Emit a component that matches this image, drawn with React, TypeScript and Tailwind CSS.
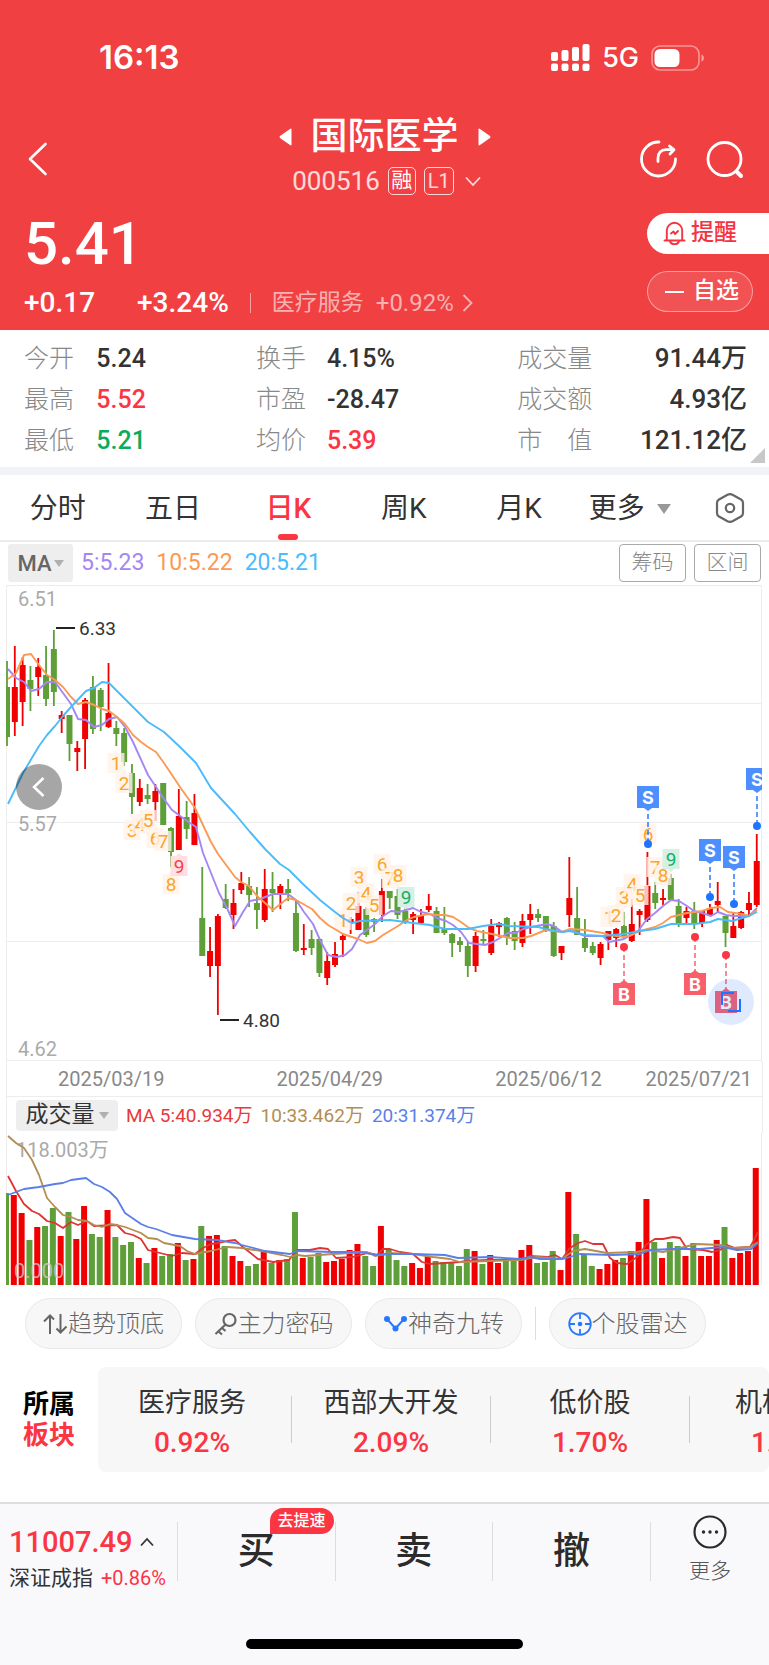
import { useState } from 'react'
import type { ReactNode } from 'react'
import clsx from 'clsx'

type Candle = [color: 'r' | 'g', high: number, top: number, bottom: number, low: number, volume: number]
type Point = [x: number, y: number]

const RED = '#f00000'
const GREEN = '#5e9f39'

// candle extents in plot units, measured down from the top of the price pane
const candles: Candle[] = [
  ['g', 76, 102, 152, 161, 92], ['r', 61, 102, 137, 151, 90], ['r', 72, 80, 117, 141, 72], ['g', 81, 95, 104, 126, 45],
  ['r', 73, 82, 92, 111, 58], ['g', 61, 90, 114, 121, 59], ['g', 45, 64, 107, 121, 77], ['r', 126, 130, 134, 148, 49],
  ['g', 130, 130, 159, 176, 73], ['r', 156, 163, 167, 186, 46], ['r', 113, 115, 154, 184, 79], ['g', 91, 102, 144, 149, 51],
  ['g', 103, 105, 122, 146, 48], ['r', 78, 128, 142, 143, 75], ['g', 136, 143, 149, 161, 48], ['g', 143, 148, 177, 181, 40],
  ['g', 179, 188, 212, 229, 43], ['r', 194, 203, 217, 221, 27], ['g', 199, 210, 214, 219, 22], ['r', 199, 206, 217, 236, 37],
  ['g', 198, 198, 240, 240, 29], ['g', 242, 243, 267, 282, 31], ['r', 204, 231, 265, 265, 42], ['g', 216, 232, 244, 254, 25],
  ['r', 209, 228, 260, 260, 26], ['g', 282, 333, 371, 371, 59], ['r', 342, 366, 381, 392, 49], ['r', 329, 331, 381, 430, 50],
  ['g', 299, 314, 323, 324, 39], ['r', 304, 318, 330, 344, 29], ['r', 287, 298, 305, 309, 24], ['g', 292, 301, 310, 322, 19],
  ['g', 302, 318, 325, 344, 21], ['r', 284, 304, 335, 337, 33], ['g', 287, 304, 308, 327, 22], ['r', 299, 301, 308, 324, 25],
  ['g', 294, 304, 308, 316, 26], ['g', 315, 328, 366, 367, 73], ['r', 339, 363, 365, 370, 27], ['g', 345, 354, 363, 370, 28],
  ['g', 353, 354, 388, 392, 32], ['r', 367, 376, 393, 400, 23], ['r', 357, 369, 380, 382, 24], ['r', 348, 351, 355, 372, 26],
  ['r', 332, 334, 338, 349, 35], ['r', 307, 321, 345, 345, 41], ['g', 322, 324, 350, 352, 29], ['g', 333, 334, 337, 347, 19],
  ['r', 294, 306, 330, 337, 59], ['g', 306, 306, 313, 324, 35], ['g', 304, 311, 330, 334, 25], ['g', 321, 326, 338, 339, 19],
  ['r', 327, 329, 335, 349, 22], ['r', 324, 330, 338, 338, 17], ['r', 309, 321, 325, 327, 29], ['g', 322, 326, 348, 348, 24],
  ['g', 322, 343, 348, 350, 23], ['g', 348, 349, 358, 372, 23], ['g', 352, 356, 360, 367, 19], ['g', 357, 361, 381, 392, 36],
  ['r', 347, 351, 381, 387, 34], ['g', 345, 354, 355, 360, 21], ['r', 334, 341, 368, 370, 30], ['r', 337, 338, 342, 352, 22],
  ['g', 332, 333, 352, 360, 25], ['g', 337, 346, 356, 365, 25], ['r', 329, 336, 358, 362, 35], ['r', 319, 329, 335, 349, 40],
  ['g', 324, 329, 333, 337, 22], ['g', 331, 331, 346, 347, 23], ['g', 337, 341, 371, 372, 34], ['r', 361, 361, 368, 375, 15],
  ['r', 272, 313, 330, 342, 93], ['g', 302, 333, 350, 350, 51], ['g', 334, 353, 363, 367, 30], ['g', 357, 361, 368, 370, 19],
  ['r', 357, 359, 373, 380, 16], ['r', 346, 346, 355, 365, 21], ['r', 343, 344, 353, 362, 25], ['g', 327, 341, 352, 353, 27],
  ['r', 314, 339, 356, 357, 34], ['r', 324, 326, 330, 350, 43], ['r', 267, 301, 335, 337, 86], ['g', 297, 308, 318, 324, 43],
  ['r', 304, 313, 315, 320, 27], ['g', 289, 293, 315, 315, 43], ['g', 314, 321, 338, 342, 39], ['r', 322, 326, 333, 338, 29],
  ['g', 317, 326, 339, 344, 42], ['r', 326, 326, 338, 342, 29], ['r', 319, 323, 330, 330, 29], ['r', 297, 316, 320, 327, 45],
  ['g', 331, 331, 348, 362, 58], ['r', 327, 341, 353, 353, 27], ['r', 326, 327, 343, 344, 32], ['r', 307, 318, 325, 330, 34],
  ['r', 249, 276, 320, 322, 117],
]

const priceLines: { color: string; points: Point[] }[] = [
  {
    color: '#a487f2',
    points: [
      [8, 84], [16, 93], [24, 97], [31, 106], [39, 104], [47, 97], [55, 97], [63, 108], [71, 119], [78, 134], [86, 135],
      [94, 142], [102, 140], [109, 134], [117, 132], [125, 142], [133, 157], [148, 190], [164, 214], [172, 225], [187, 236],
      [196, 242], [203, 268], [211, 288], [219, 308], [227, 323], [235, 341], [243, 327], [250, 316], [260, 314], [273, 309],
      [288, 309], [296, 315], [304, 327], [313, 339], [320, 355], [328, 370], [337, 372], [345, 370], [352, 364], [360, 350],
      [367, 345], [375, 339], [383, 331], [391, 326], [399, 327], [413, 323], [421, 327], [430, 329], [437, 333], [446, 336],
      [453, 340], [461, 347], [469, 358], [485, 360], [493, 357], [500, 353], [508, 348], [516, 348], [523, 344], [531, 342],
      [547, 339], [554, 341], [562, 347], [570, 345], [585, 351], [603, 351], [609, 357], [624, 354], [638, 346], [647, 334],
      [655, 328], [663, 321], [671, 315], [679, 316], [687, 321], [694, 326], [702, 328], [711, 331], [718, 327], [726, 330],
      [734, 331], [749, 331], [757, 323],
    ],
  },
  {
    color: '#fb9a54',
    points: [
      [8, 94], [16, 88], [24, 70], [31, 69], [39, 80], [47, 90], [55, 95], [63, 102], [71, 112], [78, 119], [86, 117],
      [94, 120], [102, 124], [109, 126], [117, 132], [125, 139], [133, 150], [141, 157], [148, 162], [156, 167], [164, 178],
      [172, 190], [180, 202], [195, 223], [202, 238], [211, 257], [218, 269], [235, 292], [241, 297], [249, 301], [257, 311],
      [265, 318], [273, 325], [288, 313], [296, 315], [312, 324], [320, 333], [328, 340], [343, 349], [358, 354], [367, 358],
      [375, 356], [383, 350], [398, 341], [407, 335], [414, 332], [428, 329], [437, 330], [445, 330], [453, 332], [461, 337],
      [469, 343], [477, 346], [492, 349], [510, 353], [523, 353], [531, 351], [546, 345], [562, 347], [570, 344], [585, 345],
      [603, 348], [609, 350], [624, 352], [632, 350], [640, 346], [655, 342], [663, 338], [671, 332], [687, 328], [702, 326],
      [711, 323], [720, 322], [728, 327], [742, 329], [749, 331], [757, 325],
    ],
  },
  {
    color: '#4bbbfb',
    points: [
      [8, 219], [23, 188], [39, 161], [47, 150], [55, 141], [63, 131], [71, 122], [86, 106], [94, 103], [102, 97], [109, 98],
      [117, 106], [133, 122], [148, 137], [164, 147], [180, 162], [196, 178], [211, 203], [235, 229], [250, 247], [265, 264],
      [280, 279], [289, 285], [304, 300], [320, 315], [335, 327], [343, 333], [352, 338], [360, 336], [390, 335], [405, 337],
      [430, 340], [445, 344], [468, 344], [483, 341], [498, 339], [510, 341], [538, 342], [546, 344], [562, 347], [570, 346],
      [585, 350], [603, 351], [624, 349], [640, 346], [655, 344], [671, 339], [695, 339], [710, 337], [718, 334], [732, 336],
      [749, 331], [757, 327],
    ],
  },
]

const volumeLines: { color: string; points: Point[] }[] = [
  {
    color: '#e03434',
    points: [
      [8, 43], [16, 58], [24, 71], [32, 78], [39, 81], [47, 88], [55, 90], [63, 95], [71, 89], [78, 92], [87, 88], [94, 93],
      [117, 92], [125, 100], [133, 102], [141, 106], [148, 117], [160, 120], [172, 123], [182, 120], [195, 121], [203, 115],
      [211, 111], [219, 110], [227, 108], [235, 107], [243, 114], [258, 126], [273, 129], [289, 127], [297, 117], [310, 117],
      [320, 115], [328, 116], [336, 125], [353, 124], [360, 122], [368, 120], [377, 122], [383, 116], [390, 116], [400, 119],
      [413, 121], [422, 129], [430, 131], [445, 130], [460, 129], [467, 128], [487, 127], [522, 127], [530, 123], [547, 124],
      [555, 122], [562, 126], [570, 115], [578, 110], [585, 108], [593, 111], [603, 111], [610, 125], [617, 130], [627, 131],
      [637, 124], [647, 111], [655, 106], [663, 106], [673, 104], [680, 105], [687, 116], [703, 117], [712, 119], [720, 117],
      [727, 112], [735, 115], [750, 114], [753, 109], [758, 99],
    ],
  },
  {
    color: '#b38d52',
    points: [
      [8, 3], [16, 10], [24, 15], [32, 27], [39, 42], [47, 65], [55, 74], [63, 82], [71, 84], [78, 87], [87, 88], [94, 92],
      [102, 94], [110, 91], [117, 92], [125, 94], [133, 97], [141, 100], [148, 105], [157, 106], [164, 110], [180, 113],
      [187, 118], [195, 121], [211, 118], [227, 114], [242, 115], [267, 119], [282, 122], [290, 124], [297, 122], [305, 123],
      [333, 121], [367, 119], [375, 123], [390, 120], [413, 121], [433, 124], [450, 126], [460, 129], [490, 128], [520, 127],
      [537, 124], [562, 126], [573, 118], [585, 116], [607, 120], [637, 119], [647, 117], [663, 119], [680, 115], [697, 111],
      [720, 112], [733, 115], [750, 114], [758, 109],
    ],
  },
  {
    color: '#5b7fe8',
    points: [
      [8, 62], [16, 59], [24, 56], [39, 54], [55, 51], [63, 50], [71, 47], [86, 45], [94, 51], [102, 54], [110, 59], [117, 66],
      [125, 80], [141, 91], [148, 94], [156, 96], [172, 102], [195, 106], [217, 107], [235, 110], [242, 112], [265, 118],
      [290, 121], [297, 118], [333, 119], [360, 119], [377, 122], [390, 121], [413, 121], [445, 122], [458, 125], [490, 124],
      [520, 126], [530, 124], [540, 126], [563, 126], [580, 121], [613, 122], [640, 121], [650, 117], [673, 116], [700, 116],
      [723, 114], [737, 117], [751, 116], [758, 110],
    ],
  },
]

type Tag = { n: number; x: number; y: number; kind?: 'hot' | 'cool'; tip?: 'up' | 'down' }

const tags: Tag[] = [
  { n: 1, x: 116, y: 178, tip: 'up' },
  { n: 2, x: 124, y: 198, tip: 'up' },
  { n: 3, x: 132, y: 245 },
  { n: 4, x: 140, y: 239 },
  { n: 5, x: 148, y: 235, tip: 'up' },
  { n: 6, x: 155, y: 253 },
  { n: 7, x: 163, y: 256 },
  { n: 8, x: 171, y: 299, tip: 'up' },
  { n: 9, x: 179, y: 281, kind: 'hot', tip: 'up' },
  { n: 1, x: 343, y: 335 },
  { n: 2, x: 351, y: 318, tip: 'down' },
  { n: 3, x: 359, y: 292, tip: 'down' },
  { n: 4, x: 366, y: 308 },
  { n: 5, x: 374, y: 320, tip: 'down' },
  { n: 6, x: 382, y: 279, tip: 'down' },
  { n: 7, x: 390, y: 293 },
  { n: 8, x: 398, y: 290, tip: 'down' },
  { n: 9, x: 406, y: 312, kind: 'cool', tip: 'down' },
  { n: 1, x: 609, y: 332 },
  { n: 2, x: 616, y: 330, tip: 'down' },
  { n: 3, x: 624, y: 312 },
  { n: 4, x: 632, y: 299 },
  { n: 5, x: 640, y: 310, tip: 'down' },
  { n: 6, x: 648, y: 249, tip: 'down' },
  { n: 7, x: 655, y: 282 },
  { n: 8, x: 663, y: 290, tip: 'down' },
  { n: 9, x: 671, y: 274, kind: 'cool', tip: 'down' },
]

const trades = [
  { side: 'S', x: 648, y: 212, dot: 259 },
  { side: 'S', x: 710, y: 265, dot: 312 },
  { side: 'S', x: 734, y: 272, dot: 319 },
  { side: 'S', x: 757, y: 194, dot: 241 },
  { side: 'B', x: 624, y: 409, dot: 362 },
  { side: 'B', x: 695, y: 399, dot: 352 },
  { side: 'B', x: 726, y: 417, dot: 370 },
]

const stats = [
  ['今开', '5.24', 'text-[#333]', '换手', '4.15%', 'text-[#333]', '成交量', '91.44万'],
  ['最高', '5.52', 'text-[#fc3543]', '市盈', '-28.47', 'text-[#333]', '成交额', '4.93亿'],
  ['最低', '5.21', 'text-[#0bab5c]', '均价', '5.39', 'text-[#fc3543]', '市　值', '121.12亿'],
]

const sectors = [
  { name: '医疗服务', change: '0.92%' },
  { name: '西部大开发', change: '2.09%' },
  { name: '低价股', change: '1.70%' },
  { name: '机构重仓', change: '1.06%' },
]

const periods = ['分时', '五日', '日K', '周K', '月K']

const candleX = (i: number) => 7 + i * 7.81
const toPath = (points: Point[]) => 'M' + points.map(p => p.join(' ')).join('L')

function StatusBar() {
  return (
    <div className="flex h-10 items-center justify-between pr-[64px] pl-[99px]">
      <span className="font-[Inter,sans-serif] text-[33px] font-semibold">16:13</span>
      <div className="flex items-center gap-3">
        <svg width="39" height="28" viewBox="0 0 39 28" fill="currentColor">
          <rect x="0" y="8" width="7" height="9" rx="2" />
          <rect x="10.5" y="6" width="7" height="11" rx="2" />
          <rect x="21" y="3" width="7" height="14" rx="2" />
          <rect x="31.5" y="0" width="7" height="17" rx="2" />
          {[0, 10.5, 21, 31.5].map(x => (
            <rect key={x} x={x} y="19.5" width="7" height="7.5" rx="2" />
          ))}
        </svg>
        <span className="font-[Inter,sans-serif] text-[27px] font-medium">5G</span>
        <svg width="54" height="26" viewBox="0 0 54 26" fill="none">
          <rect x="1" y="1" width="47" height="24" rx="8" stroke="#fff" strokeOpacity=".45" strokeWidth="1.6" />
          <rect x="3.5" y="4" width="25" height="18" rx="5.5" fill="#fff" />
          <path d="M50.5 9.500c3.200 1.200 3.200 6 0 7.200z" fill="#fff" fillOpacity=".5" />
        </svg>
      </div>
    </div>
  )
}

function Header() {
  return (
    <header className="bg-[#f04042] pt-[38px] text-white">
      <StatusBar />

      <div className="mt-9 grid h-[89px] grid-cols-[1fr_auto_1fr] items-center">
        <button aria-label="返回" className="ml-7 justify-self-start">
          <svg width="20" height="34" viewBox="0 0 20 34" fill="none" stroke="currentColor" strokeWidth="2.6" strokeLinecap="round" strokeLinejoin="round">
            <path d="M17.500 2L2 17l15.500 15" />
          </svg>
        </button>

        <div className="flex flex-col items-center self-start pt-px">
          <div className="flex items-center gap-[19px]">
            <button aria-label="上一只">
              <svg width="13" height="18" viewBox="0 0 13 18" fill="currentColor">
                <path d="M12.500 1.500v15q0 1.500-1.500.500L1 10q-1-1 0-2L11 1q1.500-1 1.500.500z" />
              </svg>
            </button>
            <h1 className="text-[37px] leading-[44px] font-medium">国际医学</h1>
            <button aria-label="下一只">
              <svg width="13" height="18" viewBox="0 0 13 18" fill="currentColor">
                <path d="M.500 1.500v15q0 1.500 1.500.500L12 10q1-1 0-2L2 1Q.500 0 .500 1.500z" />
              </svg>
            </button>
          </div>
          <div className="mt-2 flex h-7 items-center pl-1 text-white/80">
            <span className="text-[26px]">000516</span>
            <span className="ml-2 flex size-7 items-center justify-center rounded-[5px] border border-white/80 text-[21px] text-white">融</span>
            <span className="ml-2 flex h-7 w-[30px] items-center justify-center rounded-[5px] border border-white/80 text-[20px]">L1</span>
            <svg className="ml-[11px]" width="16" height="11" viewBox="0 0 16 11" fill="none" stroke="currentColor" strokeWidth="1.8">
              <path d="M1 1.500l7 7.500 7-7.500" />
            </svg>
          </div>
        </div>

        <div className="mr-6 flex gap-[26px] justify-self-end">
          <button aria-label="分享">
            <svg width="40" height="40" viewBox="0 0 40 40" fill="none" stroke="currentColor" strokeWidth="2.800" strokeLinecap="round" strokeLinejoin="round">
              <path d="M20 3a17 17 0 1 0 16.500 17" />
              <path d="M19 22.500v-3.500c0-5 3-8.300 8-8.300h7.500" />
              <path d="M30.500 7l4.500 3.800-4 4.200" />
            </svg>
          </button>
          <button aria-label="搜索">
            <svg width="40" height="40" viewBox="0 0 40 40" fill="none" stroke="currentColor" strokeWidth="2.800" strokeLinecap="round">
              <circle cx="19.500" cy="20" r="16.500" />
              <path d="M32 33l4 4" strokeWidth="4" />
            </svg>
          </button>
        </div>
      </div>

      <div className="flex justify-between pb-[11px]">
        <div className="pt-[13px] pl-6">
          <p className="text-[60px] leading-[56px] font-medium">5.41</p>
          <div className="mt-[15px] flex h-8 items-center text-[28px] font-medium">
            <span>+0.17</span>
            <span className="ml-[42px]">+3.24%</span>
            <span className="mx-[21px] h-5 w-px bg-white/50" />
            <a href="#sector" className="flex items-center font-normal text-white/60">
              <span className="text-[23px]">医疗服务</span>
              <span className="ml-3 text-[24px]">+0.92%</span>
              <svg className="ml-2" width="11" height="18" viewBox="0 0 11 18" fill="none" stroke="currentColor" strokeWidth="1.800">
                <path d="M1.500 1L9.500 9l-8 8" />
              </svg>
            </a>
          </div>
        </div>

        <div className="flex w-[122px] flex-col items-start gap-[17px] pt-[10px]">
          <button className="flex h-[41px] w-full items-center gap-[5px] rounded-l-full bg-white pl-4 text-[23px] font-medium text-[#f5333f]">
            <svg width="23" height="25" viewBox="0 0 23 25" fill="none" stroke="currentColor" strokeWidth="1.900" strokeLinecap="round" strokeLinejoin="round">
              <path d="M3.800 19v-9.500a7.700 7.700 0 0 1 15.400 0V19" />
              <path d="M1.500 19.500h20M7 20c.8 4.200 8.200 4.200 9 0" />
              <path d="M8 12.500l2.500-2 1.500 2.500 3-3" />
            </svg>
            提醒
          </button>
          <button className="flex h-[41px] w-[106px] items-center gap-[9px] rounded-full border border-white/45 bg-white/10 pl-[17px] text-[23px] font-medium">
            <span className="h-[2px] w-[19px] bg-white" />
            自选
          </button>
        </div>
      </div>
    </header>
  )
}

function Stats() {
  return (
    <section className="relative border-b-8 border-[#f1f3f8] bg-white pt-2 pb-[6px]">
      <table className="w-full table-fixed">
        <colgroup>
          <col className="w-[12%]" />
          <col className="w-[20%]" />
          <col className="w-[10%]" />
          <col className="w-[25%]" />
          <col className="w-[13%]" />
          <col className="w-[20%]" />
        </colgroup>
        <tbody>
          {stats.map(([l1, v1, c1, l2, v2, c2, l3, v3]) => (
            <tr key={l1} className="h-[41px] text-[25px] leading-[41px] whitespace-nowrap">
              <th className="pl-6 text-left font-light text-[#888]">{l1}</th>
              <td className={clsx('pl-1 font-medium', c1)}>{v1}</td>
              <th className="pl-[10px] text-left font-light text-[#888]">{l2}</th>
              <td className={clsx('pl-1 font-medium', c2)}>{v2}</td>
              <th className="pl-[2px] text-left font-light text-[#888]">{l3}</th>
              <td className="pr-[22px] text-right text-[26px] font-medium text-[#333]">{v3}</td>
            </tr>
          ))}
        </tbody>
      </table>
      <svg className="absolute right-1 bottom-1" width="15" height="15" viewBox="0 0 15 15" fill="#c8c8c8">
        <path d="M15 0v15H0z" />
      </svg>
    </section>
  )
}

function Periods() {
  const [active, setActive] = useState('日K')
  return (
    <nav className="flex h-[67px] items-stretch border-b-2 border-[#ececec] text-[28px] text-[#333]">
      {periods.map(p => (
        <button key={p} onClick={() => setActive(p)} className={clsx('relative w-[15%] pt-[2px]', p === active && 'font-medium text-[#fc3543]')}>
          {p}
          {p === active && <span className="absolute bottom-0 left-1/2 h-[6px] w-5 -translate-x-1/2 rounded-[3px] bg-[#fc3543]" />}
        </button>
      ))}
      <button className="flex flex-1 items-center gap-3 pt-[2px] pl-3">
        更多
        <svg width="14" height="10" viewBox="0 0 14 10" fill="#999">
          <path d="M0 0h14L7 10z" />
        </svg>
      </button>
      <button aria-label="设置" className="mr-6">
        <svg width="30" height="30" viewBox="0 0 30 30" fill="none" stroke="#666" strokeWidth="2.200" strokeLinejoin="round">
          <path d="M12.500 1.700q2.500-1.200 5 0l8.500 4.800q2 1.200 2 3.500v10q0 2.300-2 3.500l-8.500 4.800q-2.500 1.200-5 0L4 23.500q-2-1.200-2-3.500V10q0-2.300 2-3.500z" />
          <circle cx="15" cy="15" r="4.200" />
        </svg>
      </button>
    </nav>
  )
}

function CaretDown() {
  return (
    <svg width="10" height="7" viewBox="0 0 10 7" fill="#b0b0b0">
      <path d="M0 0h10L5 7z" />
    </svg>
  )
}

function SequenceTag({ n, x, y, kind, tip }: Tag) {
  const bg = kind === 'hot' ? '#ffdfe1' : kind === 'cool' ? '#d6f1e4' : '#fff3e8'
  const fg = kind === 'hot' ? '#f5404e' : kind === 'cool' ? '#15ad68' : '#fba52c'
  return (
    <g>
      <g fill={bg} fillOpacity={kind ? 1 : 0.8}>
        <rect x={x - 8.500} y={y - 10} width="17" height="20" />
        {tip === 'up' && <path d={`M${x - 3} ${y - 10}l3-3 3 3z`} />}
        {tip === 'down' && <path d={`M${x - 3} ${y + 10}l3 3 3-3z`} />}
      </g>
      <text x={x} y={y + 7} textAnchor="middle" fontSize="19" fill={fg}>
        {n}
      </text>
    </g>
  )
}

function TradeMark({ side, x, y, dot }: (typeof trades)[number]) {
  const sell = side === 'S'
  return (
    <g>
      <path
        d={sell ? `M${x} ${y + 17}V${dot}` : `M${x} ${dot}V${y - 13}`}
        stroke={sell ? '#2878ff' : '#f9636d'}
        strokeWidth="1.500"
        strokeDasharray="5 3"
      />
      <circle cx={x} cy={dot} r="4" fill={sell ? '#1f74ff' : '#fb3644'} />
      <g fill={sell ? '#4d8fff' : '#f95f6a'}>
        <rect x={x - 11} y={y - 11} width="22" height="22" />
        <path d={sell ? `M${x - 4} ${y + 11}l4 3 4-3z` : `M${x - 4} ${y - 11}l4-3 4 3z`} />
      </g>
      <text x={x} y={y + 7} textAnchor="middle" fontSize="18" fontWeight="700" fill="#fff" fontFamily="Inter, sans-serif">
        {side}
      </text>
    </g>
  )
}

function PriceChart() {
  return (
    <div className="relative">
      <svg viewBox="0 0 769 477" className="block w-full">
        <clipPath id="pane">
          <rect x="6" y="0" width="756" height="477" />
        </clipPath>
        <g stroke="#ededed" strokeWidth="1" shapeRendering="crispEdges">
          {[0, 118, 237, 356, 475].map(y => (
            <path key={y} d={`M6 ${y}.500H762`} />
          ))}
          <path d="M6.500 0V477M761.500 0V477" />
        </g>
        <g fontSize="20" fill="#aaa">
          <text x="18" y="21">6.51</text>
          <text x="18" y="246">5.57</text>
          <text x="18" y="471">4.62</text>
        </g>
        <g clipPath="url(#pane)">
          {candles.map(([c, high, top, bottom, low], i) => (
            <g key={i} fill={c === 'r' ? RED : GREEN}>
              <rect x={candleX(i) - 0.900} y={high} width="1.800" height={low - high} />
              <rect x={candleX(i) - 3} y={top} width="6" height={Math.max(bottom - top, 2)} />
            </g>
          ))}
          {tags.map(t => (
            <SequenceTag key={`${t.n}-${t.x}`} {...t} />
          ))}
          {priceLines.map(l => (
            <path key={l.color} d={toPath(l.points)} fill="none" stroke={l.color} strokeWidth="1.900" strokeLinejoin="round" />
          ))}
          {trades.map(t => (
            <TradeMark key={t.x} {...t} />
          ))}
        </g>
        <path d="M56 43H75M220 435H239" stroke="#222" strokeWidth="1.800" />
        <g fontSize="19" fill="#333">
          <text x="79" y="50">6.33</text>
          <text x="243" y="442">4.80</text>
        </g>
      </svg>
      <button aria-label="查看更早" className="absolute top-[179px] left-4 flex size-[46px] items-center justify-center rounded-full bg-black/35">
        <svg width="14" height="20" viewBox="0 0 14 20" fill="none" stroke="#fff" strokeWidth="2.600">
          <path d="M11.500 1L2 10l9.500 9" />
        </svg>
      </button>
      <button aria-label="全屏" className="absolute top-[394px] right-[15px] flex size-[46px] items-center justify-center rounded-full bg-[#2f74ff]/15">
        <svg width="20" height="20" viewBox="0 0 20 20" fill="none" stroke="#1f74ff" strokeWidth="2">
          <path d="M1 13V1h12M19 7v12H7" />
        </svg>
      </button>
    </div>
  )
}

function Chart() {
  return (
    <section>
      <div className="flex h-[43px] items-start pt-[2px] pr-2 pl-2">
        <button className="flex h-[38px] w-[65px] items-center justify-center gap-[2px] rounded-[3px] bg-[#eee] text-[22px] font-medium text-[#666]">
          MA
          <CaretDown />
        </button>
        <div className="ml-2 flex h-[38px] flex-1 items-center gap-3 text-[23px]">
          <span className="text-[#a487f2]">5:5.23</span>
          <span className="text-[#fb9a54]">10:5.22</span>
          <span className="text-[#4bbbfb]">20:5.21</span>
        </div>
        <div className="flex gap-2 text-[21px] font-light text-[#888]">
          <button className="h-[38px] w-[67px] rounded-[4px] border border-[#aaa]">筹码</button>
          <button className="h-[38px] w-[67px] rounded-[4px] border border-[#aaa]">区间</button>
        </div>
      </div>

      <PriceChart />

      <div className="mx-[6px] border-x border-b border-[#ededed]">
        <div className="flex h-[34px] items-center pr-[10px] pl-[51px] text-[20px] text-[#888]">
          <span className="w-[31.5%]">2025/03/19</span>
          <span className="w-[31.5%]">2025/04/29</span>
          <span className="flex-1">2025/06/12</span>
          <span>2025/07/21</span>
        </div>
      </div>

      <div className="mx-[6px] flex h-9 items-center border-x border-[#ededed] pt-px pl-[9px] text-[19px]">
        <button className="mr-2 flex h-[31px] w-[102px] items-center justify-center gap-1 rounded-[4px] bg-[#eee] text-[23px] text-[#333]">
          成交量
          <CaretDown />
        </button>
        <div className="flex gap-2 pt-[2px]">
          <span className="text-[#e83a3a]">MA 5:40.934万</span>
          <span className="text-[#b38d52]">10:33.462万</span>
          <span className="text-[#5b7fe8]">20:31.374万</span>
        </div>
      </div>

      <svg viewBox="0 0 769 152" className="block w-full">
        <clipPath id="volumePane">
          <rect x="6" y="0" width="756" height="152" />
        </clipPath>
        <path d="M6.500 0V152M761.500 0V152" stroke="#ededed" />
        <g clipPath="url(#volumePane)">
          {candles.map(([c, , , , , v], i) => (
            <rect key={i} x={candleX(i) - 4} y={152 - v} width="6" height={v} fill={c === 'r' ? RED : GREEN} />
          ))}
        </g>
        <g fontSize="20" fill="#aaa">
          <text x="16" y="24">118.003万</text>
          <text x="14" y="145" fill="#ccc" fillOpacity=".8">0.000</text>
        </g>
        {volumeLines.map(l => (
          <path key={l.color} d={toPath(l.points)} fill="none" stroke={l.color} strokeWidth="1.800" strokeLinejoin="round" />
        ))}
      </svg>
    </section>
  )
}

function Chip({ icon, children }: { icon: ReactNode; children: string }) {
  return (
    <button className="flex h-[51px] w-[157px] shrink-0 items-center justify-center rounded-full border border-[#e8e8e8] bg-[#f7f7f7] text-[24px] font-light text-[#666]">
      {icon}
      {children}
    </button>
  )
}

function Tools() {
  return (
    <div className="flex items-center gap-[13px] overflow-hidden pt-[13px] pl-[25px]">
      <Chip
        icon={
          <svg width="25" height="24" viewBox="0 0 25 24" fill="none" stroke="#666" strokeWidth="2">
            <path d="M7 22V4M1 9.500l6-6 4 4M17.500 2v18M23.500 14.500l-6 6-4-4" />
          </svg>
        }
      >
        趋势顶底
      </Chip>
      <Chip
        icon={
          <svg width="24" height="24" viewBox="0 0 24 24" fill="none" stroke="#666" strokeWidth="2.200">
            <circle cx="15.500" cy="8" r="6" />
            <path d="M11.500 12.500L1.500 22M4.500 19.500l3.500 3M8 16l3.500 3" />
          </svg>
        }
      >
        主力密码
      </Chip>
      <Chip
        icon={
          <svg width="25" height="24" viewBox="0 0 25 24" fill="none" stroke="#2878ff" strokeWidth="2">
            <path d="M4 7l8.500 9.500L21 7" />
            <g fill="#2878ff" stroke="none">
              <circle cx="4" cy="7" r="3" />
              <circle cx="12.500" cy="16.500" r="3" />
              <circle cx="21" cy="7" r="3" />
            </g>
          </svg>
        }
      >
        神奇九转
      </Chip>
      <span className="h-[33px] w-px bg-[#ddd]" />
      <Chip
        icon={
          <svg width="24" height="24" viewBox="0 0 24 24" fill="none" stroke="#2878ff" strokeWidth="1.800">
            <circle cx="12" cy="12" r="10.800" />
            <path d="M12 1v6M12 17v6M1 12h6M17 12h6" />
            <circle cx="12" cy="12" r="2.300" fill="#2878ff" stroke="none" />
          </svg>
        }
      >
        个股雷达
      </Chip>
    </div>
  )
}

function Sectors() {
  return (
    <section id="sector" className="flex items-center pt-[18px] pb-[29px]">
      <h2 className="w-[98px] shrink-0 pl-[23px] text-[26px] leading-[31px] font-bold text-black">
        所属
        <br />
        <span className="text-[#fc3543]">板块</span>
      </h2>
      <ul className="flex h-[105px] flex-1 items-center overflow-hidden rounded-lg bg-[#f7f7f7]">
        {sectors.map((s, i) => (
          <li key={s.name} className={clsx('flex shrink-0 items-center', i === 0 ? 'w-[193px] pr-[5px]' : 'w-[199px]')}>
            {i > 0 && <span className="h-[47px] w-px bg-[#ccc]" />}
            <div className="flex-1 pt-[6px] text-center">
              <p className="text-[27px] leading-10 text-[#333]">{s.name}</p>
              <p className="text-[28px] leading-10 font-medium text-[#fc3543]">{s.change}</p>
            </div>
          </li>
        ))}
      </ul>
    </section>
  )
}

function BottomBar() {
  return (
    <footer className="mt-auto border-t-2 border-[#dcdde1] bg-[#f9f9fc] pt-[18px]">
      <div className="flex h-[59px] items-stretch">
        <button className="flex w-[23%] flex-col pt-[2px] pl-[9px] text-left whitespace-nowrap">
          <span className="flex items-center gap-2 text-[29px] leading-9 font-medium text-[#fc3543]">
            11007.49
            <svg width="14" height="10" viewBox="0 0 14 10" fill="none" stroke="#333" strokeWidth="1.800">
              <path d="M1 8.500l6-6.500 6 6.500" />
            </svg>
          </span>
          <span className="flex items-center gap-2 text-[21px] leading-9 text-[#333]">
            深证成指
            <span className="text-[20px] text-[#fc3543]">+0.86%</span>
          </span>
        </button>
        {['买', '卖', '撤'].map(label => (
          <button key={label} className="relative flex-1 border-l border-[#dcdde1] text-[37px] font-medium text-[#2b2b2b]">
            {label}
            {label === '买' && (
              <span className="absolute -top-[14px] right-px rounded-full rounded-bl-none bg-[#fc3543] px-2 text-[16px] leading-[26px] text-white">去提速</span>
            )}
          </button>
        ))}
        <button className="flex w-[15.5%] flex-col items-center justify-center gap-[7px] border-l border-[#dcdde1] text-[21px] font-light text-[#555]">
          <svg width="34" height="34" viewBox="0 0 34 34" className="shrink-0" fill="none" stroke="#2b2b2b" strokeWidth="2.200">
            <circle cx="17" cy="17" r="15.500" />
            <g fill="#2b2b2b" stroke="none">
              <circle cx="10.500" cy="17" r="1.700" />
              <circle cx="17" cy="17" r="1.700" />
              <circle cx="23.500" cy="17" r="1.700" />
            </g>
          </svg>
          更多
        </button>
      </div>
      <div className="mx-auto mt-[58px] mb-4 h-[10px] w-[36%] rounded-full bg-black" />
    </footer>
  )
}

export default function App() {
  return (
    <main className="flex min-h-screen flex-col overflow-x-hidden bg-white font-[Roboto,'Noto_Sans_CJK_SC',sans-serif]">
      <Header />
      <Stats />
      <Periods />
      <Chart />
      <Tools />
      <Sectors />
      <BottomBar />
    </main>
  )
}
